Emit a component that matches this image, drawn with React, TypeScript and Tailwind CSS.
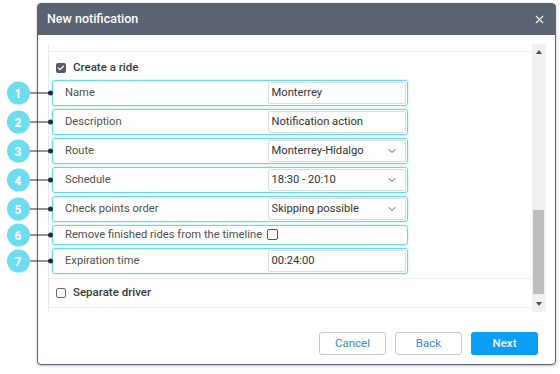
import React from 'react';
import { ChevronDown, X, Check } from 'lucide-react';

type Row = {
  n: number;
  label: string;
  value?: string;
  select?: boolean;
  checkbox?: boolean;
};

const rows: Row[] = [
  { n: 1, label: 'Name', value: 'Monterrey' },
  { n: 2, label: 'Description', value: 'Notification action' },
  { n: 3, label: 'Route', value: 'Monterrey-Hidalgo', select: true },
  { n: 4, label: 'Schedule', value: '18:30 - 20:10', select: true },
  { n: 5, label: 'Check points order', value: 'Skipping possible', select: true },
  { n: 6, label: 'Remove finished rides from the timeline', checkbox: true },
  { n: 7, label: 'Expiration time', value: '00:24:00' },
];

const Callout: React.FC<{ n: number }> = ({ n }) => (
  <div className="absolute left-[-46px] top-1/2 -translate-y-1/2 flex items-center pointer-events-none">
    <div className="w-[23px] h-[23px] rounded-full bg-[#6ddcef] text-white text-[12px] font-bold flex items-center justify-center">
      {n}
    </div>
    <div className="w-[20px] h-[1.5px] bg-[#1f2b45]" />
    <div className="w-[5px] h-[5px] rounded-full bg-[#1f2b45] -ml-[2px]" />
  </div>
);

const FieldRow: React.FC<{ row: Row }> = ({ row }) => (
  <div
    className={`relative flex items-center w-[356px] rounded-[3px] border-[1.5px] border-[#62d8ed] shadow-[0_0_2px_#8ee6f5] ${
      row.checkbox ? 'h-[20px]' : 'h-[26px]'
    }`}
  >
    <Callout n={row.n} />
    {row.checkbox ? (
      <div className="flex items-center pl-[12.5px] text-[11.2px] text-[#505050]">
        <span>{row.label}</span>
        <span className="ml-[5px] w-[11px] h-[11px] border border-[#555] rounded-[2px] bg-white" />
      </div>
    ) : (
      <>
        <div className="w-[215px] pl-[12.5px] text-[11.2px] text-[#505050] shrink-0">{row.label}</div>
        <div className="flex-1 h-[22px] mr-[0.5px] flex items-center justify-between border border-[#dcdcdc] rounded-[2px] pl-[3px] pr-[7px] text-[11.2px] text-[#333] bg-white">
          <span>{row.value}</span>
          {row.select && <ChevronDown size={12} strokeWidth={2} className="text-[#555]" />}
        </div>
      </>
    )}
  </div>
);

export default function App() {
  return (
    <div className="w-[560px] h-[374px] bg-white pt-[3px] pl-[37px] font-['Roboto',sans-serif]">
      <div className="w-[519px] h-[362px] border-[1.5px] border-[#5b6271] rounded-[4px] bg-white flex flex-col shadow-[0_1px_3px_rgba(0,0,0,0.25)]">
        <div className="h-[31px] bg-[#5b6271] flex items-center justify-between pl-[9px] pr-[9px] shrink-0">
          <span className="text-white text-[12.5px] font-medium">New notification</span>
          <X size={13} strokeWidth={2} className="text-white" />
        </div>

        <div className="pt-[9px] pl-[9.5px] pr-[9.5px] flex h-[277px] shrink-0">
          <div className="flex-1 border-l border-[#e8e8e8] flex flex-col">
            <div className="h-[8px] border-b border-[#eeeeee]" />
            <div className="h-[28px] flex items-center pl-[7.5px] pt-[3px] gap-[7px]">
              <span className="w-[10px] h-[10px] rounded-[2px] bg-[#555b66] flex items-center justify-center">
                <Check size={8} strokeWidth={3.5} className="text-white" />
              </span>
              <span className="text-[11.5px] font-medium text-[#3a3a3a]">Create a ride</span>
            </div>
            <div className="flex flex-col gap-[3px] ml-[3px]">
              {rows.map(r => (
                <FieldRow key={r.n} row={r} />
              ))}
            </div>
            <div className="mt-[4px] border-t border-[#eeeeee] h-[30px] flex items-center pl-[7.5px] gap-[7px] border-b">
              <span className="w-[10px] h-[10px] rounded-[2px] border border-[#666] bg-white" />
              <span className="text-[11.5px] font-medium text-[#3a3a3a]">Separate driver</span>
            </div>
          </div>

          <div className="w-[14px] bg-[#f0f0f0] flex flex-col items-center justify-between py-[6px]">
            <span className="w-0 h-0 border-l-[3.5px] border-r-[3.5px] border-b-[4px] border-l-transparent border-r-transparent border-b-[#505050]" />
            <div className="flex-1 w-full flex flex-col justify-end px-[1.5px] pb-[8px]">
              <div className="h-[84px] bg-[#bdbdbd]" />
            </div>
            <span className="w-0 h-0 border-l-[3.5px] border-r-[3.5px] border-t-[4px] border-l-transparent border-r-transparent border-t-[#505050]" />
          </div>
        </div>

        <div className="flex justify-end gap-[9px] pt-[20px] pr-[17px]">
          <button className="w-[67px] h-[23px] rounded-[3px] border border-[#c8c8c8] bg-white text-[11.5px] text-[#3d8acb]">
            Cancel
          </button>
          <button className="w-[67px] h-[23px] rounded-[3px] border border-[#c8c8c8] bg-white text-[11.5px] text-[#3d8acb]">
            Back
          </button>
          <button className="w-[67px] h-[23px] rounded-[3px] bg-[#0a9ef5] text-[11.5px] font-medium text-white">
            Next
          </button>
        </div>
      </div>
    </div>
  );
}
